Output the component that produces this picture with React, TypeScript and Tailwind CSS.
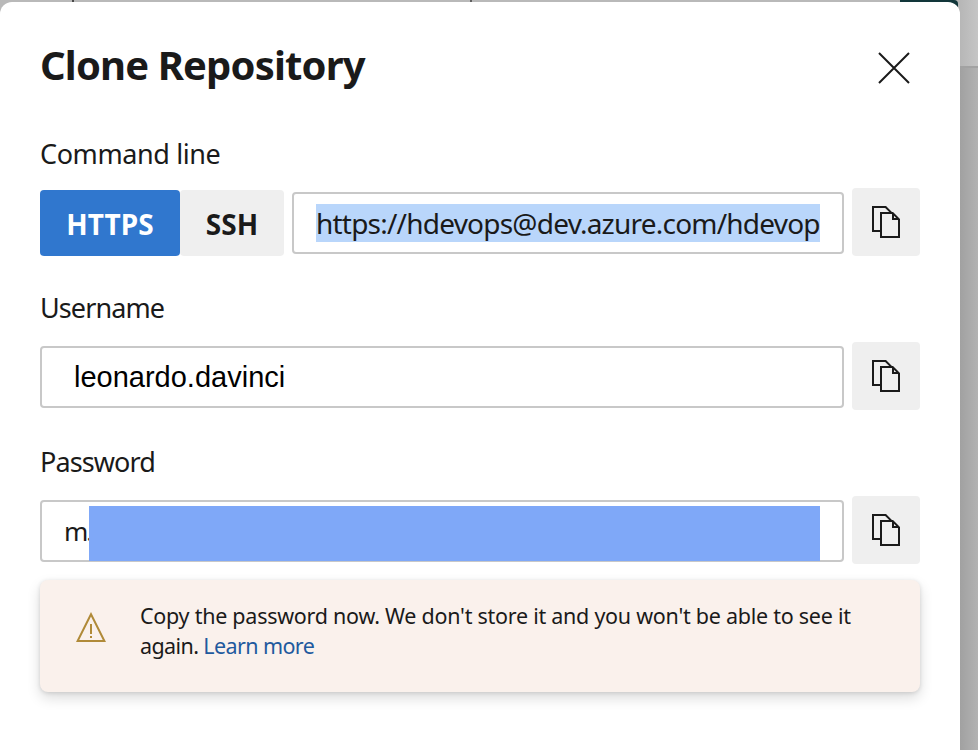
import type { ReactNode } from "react";

function CopyButton() {
  return (
    <button className="flex h-[68px] w-[68px] shrink-0 items-center justify-center rounded-[4px] bg-[#efefef]" aria-label="Copy">
      <svg width="28" height="32" viewBox="0 0 28 32" fill="none" stroke="#1a1a1a" strokeWidth="2">
        <path d="M8 25H1V1H13.6L20 7.4" />
        <path d="M9 7H20.6L27 13.4V31H9Z" />
        <path d="M21 7V13H27" />
      </svg>
    </button>
  );
}

function Label({ className, children }: { className: string; children: ReactNode }) {
  return <div className={`h-[38px] text-[27px] leading-[38px] whitespace-nowrap ${className}`}>{children}</div>;
}

const field = "mt-[2px] h-[62px] min-w-0 flex-1 rounded-[4px] border-2 border-[#c8c8c8] bg-white";

export default function App() {
  return (
    <div className="relative h-[750px] w-[978px] overflow-hidden bg-[#b9b9b9] pt-[2px] font-['Noto_Sans','Open_Sans',sans-serif] text-[#1a1a1a]">
      <div className="absolute top-0 left-[72px] h-3 w-[2px] bg-[#484848]" />
      <div className="absolute top-0 left-[470px] h-3 w-[2px] bg-[#606060]" />
      <div className="absolute top-0 left-[900px] h-5 w-[58px] rounded-tr-[4px] bg-[#12363a]" />
      <div className="absolute top-0 left-[958px] h-[66px] w-5 bg-gradient-to-r from-[#b5b5b5] to-[#c5c5c5]" />
      <div className="absolute top-[66px] left-[958px] h-[2px] w-5 bg-[#a2a2a2]" />
      <div className="absolute top-[68px] left-[958px] h-[682px] w-5 bg-gradient-to-r from-[#9f9f9f] to-[#b2b2b2]" />

      <div className="relative h-[760px] w-[960px] rounded-t-[12px] bg-white px-10 pt-[35px]">
        <div className="flex h-[56px] justify-between">
          <h1 className="text-[40px] leading-[56px] font-bold tracking-[-0.86px] whitespace-nowrap">Clone Repository</h1>
          <svg className="mt-[15px] mr-[10px]" width="32" height="32" viewBox="0 0 32 32" stroke="#1a1a1a" strokeWidth="2">
            <path d="M1 1L31 31M31 1L1 31" />
          </svg>
        </div>

        <Label className="mt-[42px] tracking-[-0.4px]">Command line</Label>
        <div className="mt-[15px] flex h-[68px] items-center">
          <div className="mt-[2px] flex h-[66px] items-center text-[28px] font-bold">
            <div className="flex h-[66px] w-[140px] items-center justify-center rounded-[4px] bg-[#3077ce] pt-[2px] tracking-[0.1px] text-white">HTTPS</div>
            <div className="flex h-[66px] w-[104px] items-center justify-center rounded-[4px] bg-[#efefef] pt-[2px]">SSH</div>
          </div>
          <div className={`ml-2 flex items-center px-[22px] ${field}`}>
            <div className="h-[38px] w-[504px] overflow-hidden bg-[#b9d6fb] text-[28px] leading-[38px] tracking-[-0.78px] whitespace-nowrap">https://hdevops@dev.azure.com/hdevop</div>
          </div>
          <div className="ml-2"><CopyButton /></div>
        </div>

        <Label className="mt-[33px] tracking-[-0.9px]">Username</Label>
        <div className="mt-[15px] flex h-[68px] items-center">
          <div className={`flex items-center pt-px pl-[32px] font-['Liberation_Sans',Arial,sans-serif] text-[29px] text-black ${field}`}>leonardo.davinci</div>
          <div className="ml-2"><CopyButton /></div>
        </div>

        <Label className="mt-[33px] tracking-[-0.9px]">Password</Label>
        <div className="mt-[15px] flex h-[68px] items-center">
          <div className={`relative flex items-center pt-px pl-[22px] text-[26px] tracking-[-2px] ${field}`}>
            m.
            <div className="absolute top-1 left-[47px] h-[55px] w-[731px] bg-[#7fa8f8]" />
          </div>
          <div className="ml-2"><CopyButton /></div>
        </div>

        <div className="mt-4 flex h-[112px] rounded-[8px] bg-[#faf1ec] pt-[21px] pl-[36px] shadow-[0_6px_14px_rgba(0,0,0,0.14),0_1px_4px_rgba(0,0,0,0.12)]">
          <svg className="mt-[11px] shrink-0" width="30" height="30" viewBox="0 0 30 30" fill="none" stroke="#b08a38" strokeWidth="2">
            <path d="M15 2.2L28.4 29H1.6Z" />
            <path d="M15 12V22M15 24V26" />
          </svg>
          <div className="ml-[34px] text-[21.5px] leading-[30px] whitespace-nowrap">
            <div className="tracking-[-0.26px]">Copy the password now. We don't store it and you won't be able to see it</div>
            <div className="tracking-[-0.6px]">again. <a className="text-[#1f5a9e]">Learn more</a></div>
          </div>
        </div>
      </div>
    </div>
  );
}
